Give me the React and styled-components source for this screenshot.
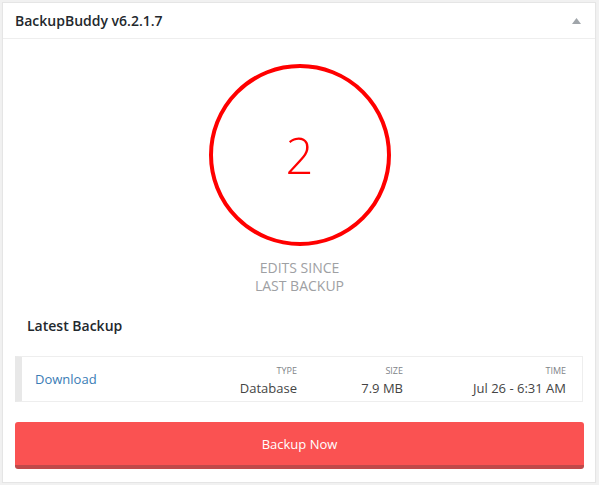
import styled, { createGlobalStyle } from 'styled-components'

const GlobalStyle = createGlobalStyle`
  body {
    margin: 0;
    background: #f1f1f1;
    font-family: 'Open Sans', 'Liberation Sans', sans-serif;
  }
`

const Card = styled.section`
  margin: 2px 3px 0 2px;
  height: 481px;
  box-sizing: border-box;
  background: #fff;
  border: 1px solid #e5e5e5;
  box-shadow: 0 1px 1px rgba(0, 0, 0, 0.04);
  display: flex;
  flex-flow: column;
`

const Header = styled.header`
  height: 35px;
  border-bottom: 1px solid #eee;
  display: flex;
  align-items: center;
  justify-content: space-between;
  padding: 0 14px 0 12px;
`

const Title = styled.h2`
  margin: 0;
  font-size: 14px;
  font-weight: 600;
  color: #23282d;
`

const Toggle = styled.svg`
  width: 9px;
  height: 6px;
  fill: #a0a5aa;
`

const Body = styled.div`
  flex: 1;
  display: flex;
  flex-flow: column;
  padding: 25px 11px 12px 12px;
`

const Counter = styled.div`
  align-self: center;
  width: 182px;
  height: 182px;
  box-sizing: border-box;
  border: 4px solid #ff0000;
  border-radius: 50%;
  display: flex;
  align-items: center;
  justify-content: center;
  color: #ff0000;
  font-size: 49px;
  font-weight: 300;
`

const Caption = styled.p`
  margin: 13px 0 0;
  text-align: center;
  font-size: 14px;
  line-height: 18px;
  text-transform: uppercase;
  color: #9ea0a3;
`

const SectionTitle = styled.h3`
  margin: 21px 0 0 12px;
  font-size: 14px;
  font-weight: 600;
  color: #23282d;
`

const BackupRow = styled.div`
  margin-top: 21px;
  height: 46px;
  box-sizing: border-box;
  border: 1px solid #eee;
  border-left: 7px solid #e8e8e8;
  display: flex;
  align-items: center;
  padding: 0 16px 0 13px;
  margin-right: 1px;
`

const Link = styled.a`
  flex: 1;
  font-size: 13px;
  color: #3a7cb5;
  text-decoration: none;
`

const Column = styled.div`
  width: ${({ $width }) => $width}px;
  text-align: right;
  display: flex;
  flex-flow: column;
  padding-top: 3px;
`

const Label = styled.span`
  font-size: 9px;
  line-height: 14px;
  text-transform: uppercase;
  color: #808489;
`

const Value = styled.span`
  font-size: 13px;
  line-height: 20px;
  color: #444;
`

const BackupButton = styled.button`
  margin-top: 20px;
  height: 47px;
  border: 0;
  border-bottom: 4px solid #c0494a;
  border-radius: 3px;
  background: #fa5252;
  color: #fff;
  font-family: inherit;
  font-size: 13px;
  cursor: pointer;
`

const columns = [
  { label: 'Type', value: 'Database', width: 100 },
  { label: 'Size', value: '7.9 MB', width: 106 },
  { label: 'Time', value: 'Jul 26 - 6:31 AM', width: 163 },
]

export default function App() {
  return (
    <>
      <GlobalStyle />
      <Card>
        <Header>
          <Title>BackupBuddy v6.2.1.7</Title>
          <Toggle viewBox="0 0 9 6">
            <polygon points="4.5,0 9,6 0,6" />
          </Toggle>
        </Header>
        <Body>
          <Counter>2</Counter>
          <Caption>
            Edits since
            <br />
            last backup
          </Caption>
          <SectionTitle>Latest Backup</SectionTitle>
          <BackupRow>
            <Link href="#">Download</Link>
            {columns.map((col) => (
              <Column key={col.label} $width={col.width}>
                <Label>{col.label}</Label>
                <Value>{col.value}</Value>
              </Column>
            ))}
          </BackupRow>
          <BackupButton>Backup Now</BackupButton>
        </Body>
      </Card>
    </>
  )
}
